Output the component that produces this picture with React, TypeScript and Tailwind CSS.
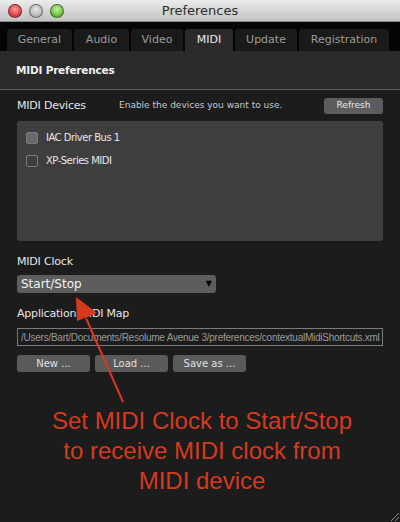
import React from "react";

const ui = { fontFamily: '"DejaVu Sans", "Noto Sans", sans-serif' };
const tabs = [
  { name: "General", w: "w-[65px]" },
  { name: "Audio", w: "w-[55px]" },
  { name: "Video", w: "w-[52px]" },
  { name: "MIDI", w: "w-[48px]", active: true },
  { name: "Update", w: "w-[62px]" },
  { name: "Registration", w: "w-[90px]" },
];

function Light({ from, to }: { from: string; to: string }) {
  return (
    <div
      className="w-[14px] h-[14px] rounded-full border border-black/40"
      style={{ background: `radial-gradient(circle at 50% 35%, ${from}, ${to})` }}
    />
  );
}

export default function App() {
  return (
    <div className="relative w-[400px] h-[522px] overflow-hidden bg-[#1c1c1c] flex flex-col" style={ui}>
      {/* Title bar */}
      <div className="relative h-[22px] shrink-0 bg-gradient-to-b from-[#ececec] to-[#c2c2c2] border-b border-[#8a8a8a] flex items-center pl-[8px] gap-[7px]">
        <Light from="#ff9a9a" to="#c4121a" />
        <Light from="#e8e8e8" to="#9c9c9c" />
        <Light from="#c4f59a" to="#3f9d13" />
        <div className="absolute inset-0 flex items-center justify-center text-[13px] text-[#2c2c2c]">Preferences</div>
      </div>

      {/* Tabs */}
      <div className="h-[29px] shrink-0 bg-[#050505] flex items-end pl-[7px] gap-[2px]">
        {tabs.map((t) => (
          <div
            key={t.name}
            className={`${t.w} h-[22px] rounded-t-[3px] flex items-center justify-center text-[11px] ${
              t.active ? "bg-[#2a2a2a] text-[#ececec]" : "bg-[#1a1a1a] text-[#9c9c9c]"
            }`}
          >
            {t.name}
          </div>
        ))}
      </div>

      {/* Header */}
      <div className="h-[39px] shrink-0 bg-[#2a2a2a] border-b border-[#5e5e5e] flex items-center pl-[16px] pt-[2px] text-[10.5px] font-bold text-[#f0f0f0] tracking-[-0.2px]">
        MIDI Preferences
      </div>

      {/* Content */}
      <div className="px-[17px] flex flex-col">
        <div className="mt-[8px] h-[16px] flex items-center">
          <span className="text-[11px] text-[#e6e6e6] w-[102px] tracking-[-0.2px]">MIDI Devices</span>
          <span className="text-[9px] text-[#c8c8c8]">Enable the devices you want to use.</span>
          <button className="ml-auto w-[59px] h-[16px] rounded-[3px] bg-[#5c5c5c] text-[9px] text-[#e8e8e8]">Refresh</button>
        </div>

        <div className="mt-[7px] h-[120px] rounded-[3px] bg-[#3e3e3e] pt-[9px] pl-[9px] flex flex-col gap-[8px]">
          <div className="flex items-center gap-[8px]">
            <div className="w-[12px] h-[12px] rounded-[2px] bg-[#6a6a6a] border border-[#7c7c7c]" />
            <span className="text-[10px] text-[#e8e8e8] tracking-[-0.5px]">IAC Driver Bus 1</span>
          </div>
          <div className="flex items-center gap-[8px]">
            <div className="w-[12px] h-[12px] rounded-[2px] border border-[#7c7c7c]" />
            <span className="text-[10px] text-[#e8e8e8] tracking-[-0.5px]">XP-Series MIDI</span>
          </div>
        </div>

        <div className="mt-[14px] text-[11px] text-[#e6e6e6] leading-[14px] tracking-[-0.2px]">MIDI Clock</div>
        <div className="mt-[6px] w-[199px] h-[18px] rounded-[3px] bg-[#5d5d5d] flex items-center pl-[4px] pr-[4px]">
          <span className="text-[12px] text-[#f2f2f2]">Start/Stop</span>
          <span className="ml-auto text-[8px] text-black">▼</span>
        </div>

        <div className="mt-[14px] text-[11px] text-[#e6e6e6] leading-[14px] tracking-[-0.2px]">Application MIDI Map</div>
        <div className="mt-[7px] h-[18px] border border-[#7a7a7a] flex items-center pl-[3px] overflow-hidden whitespace-nowrap">
          <span
            className="text-[10px] text-[#9a9a9a] tracking-[-0.25px]"
            style={{ fontFamily: '"Liberation Sans", Arial, sans-serif' }}
          >
            /Users/Bart/Documents/Resolume Avenue 3/preferences/contextualMidiShortcuts.xml
          </span>
        </div>

        <div className="mt-[9px] flex gap-[5px]">
          {["New ...", "Load ...", "Save as ..."].map((b) => (
            <button key={b} className="w-[73px] h-[17px] rounded-[3px] bg-[#5a5a5a] text-[10px] text-[#e0e0e0]">
              {b}
            </button>
          ))}
        </div>
      </div>

      {/* Annotation */}
      <div
        className="mt-[34px] pl-[4px] text-center text-[24px] leading-[30px] text-[#d53a1f]"
        style={{ fontFamily: '"Liberation Sans", Arial, sans-serif' }}
      >
        Set MIDI Clock to Start/Stop
        <br />
        to receive MIDI clock from
        <br />
        MIDI device
      </div>

      <svg className="absolute left-0 top-0 pointer-events-none" width="400" height="522">
        <line x1="123" y1="402" x2="86" y2="318" stroke="#d53a1f" strokeWidth="2" />
        <polygon points="76,297 97,313 77,321" fill="#d53a1f" />
      </svg>

      {/* resize grip */}
      <svg className="absolute right-0 bottom-0" width="12" height="12">
        <line x1="11" y1="3" x2="3" y2="11" stroke="#8a8a8a" strokeWidth="1" />
        <line x1="11" y1="7" x2="7" y2="11" stroke="#8a8a8a" strokeWidth="1" />
      </svg>
    </div>
  );
}
